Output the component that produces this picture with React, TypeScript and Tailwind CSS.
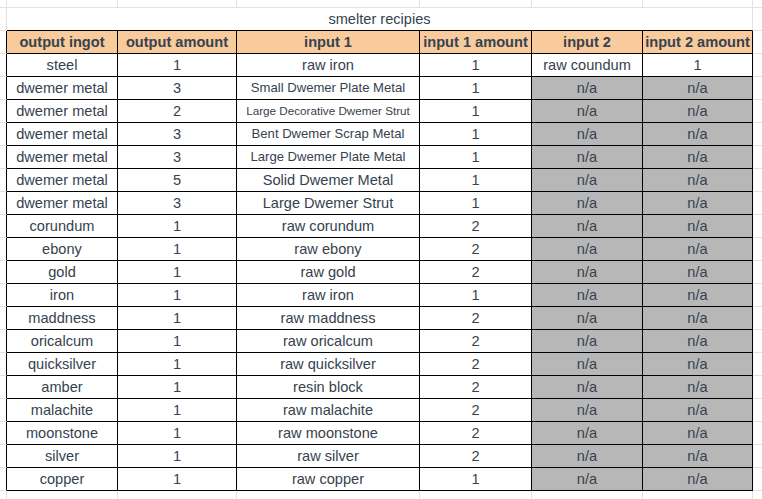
import React from 'react';

type Recipe = {
  ingot: string;
  amount: number;
  input1: string;
  input1Size?: string;
  input1Amount: number;
  input2?: string;
  input2Amount?: number;
};

const recipes: Recipe[] = [
  { ingot: 'steel', amount: 1, input1: 'raw iron', input1Amount: 1, input2: 'raw coundum', input2Amount: 1 },
  { ingot: 'dwemer metal', amount: 3, input1: 'Small Dwemer Plate Metal', input1Size: 'text-[13.1px]', input1Amount: 1 },
  { ingot: 'dwemer metal', amount: 2, input1: 'Large Decorative Dwemer Strut', input1Size: 'text-[11.7px]', input1Amount: 1 },
  { ingot: 'dwemer metal', amount: 3, input1: 'Bent Dwemer Scrap Metal', input1Size: 'text-[13.1px]', input1Amount: 1 },
  { ingot: 'dwemer metal', amount: 3, input1: 'Large Dwemer Plate Metal', input1Size: 'text-[13.1px]', input1Amount: 1 },
  { ingot: 'dwemer metal', amount: 5, input1: 'Solid Dwemer Metal', input1Amount: 1 },
  { ingot: 'dwemer metal', amount: 3, input1: 'Large Dwemer Strut', input1Amount: 1 },
  { ingot: 'corundum', amount: 1, input1: 'raw corundum', input1Amount: 2 },
  { ingot: 'ebony', amount: 1, input1: 'raw ebony', input1Amount: 2 },
  { ingot: 'gold', amount: 1, input1: 'raw gold', input1Amount: 2 },
  { ingot: 'iron', amount: 1, input1: 'raw iron', input1Amount: 1 },
  { ingot: 'maddness', amount: 1, input1: 'raw maddness', input1Amount: 2 },
  { ingot: 'oricalcum', amount: 1, input1: 'raw oricalcum', input1Amount: 2 },
  { ingot: 'quicksilver', amount: 1, input1: 'raw quicksilver', input1Amount: 2 },
  { ingot: 'amber', amount: 1, input1: 'resin block', input1Amount: 2 },
  { ingot: 'malachite', amount: 1, input1: 'raw malachite', input1Amount: 2 },
  { ingot: 'moonstone', amount: 1, input1: 'raw moonstone', input1Amount: 2 },
  { ingot: 'silver', amount: 1, input1: 'raw silver', input1Amount: 2 },
  { ingot: 'copper', amount: 1, input1: 'raw copper', input1Amount: 1 },
];

// column widths incl. the 1px right border
const cols = ['w-[7px]', 'w-[111px]', 'w-[119px]', 'w-[183px]', 'w-[112px]', 'w-[111px]', 'w-[110px]'];

const Cell = ({ w, className = '', children }: { w: string; className?: string; children?: React.ReactNode }) => (
  <div className={`${w} shrink-0 flex items-center justify-center whitespace-nowrap border-r border-b ${className}`}>
    {children}
  </div>
);

const headers = ['output ingot', 'output amount', 'input 1', 'input 1 amount', 'input 2', 'input 2 amount'];

const App: React.FC = () => {
  return (
    <div className="w-[762px] h-[499px] overflow-hidden bg-white text-[#36424e] font-['Liberation_Sans',Arial,sans-serif] text-[14.6px] leading-none">
      {/* top strip of empty sheet row */}
      <div className="flex h-[8px]">
        {cols.map((w, i) => (
          <div key={i} className={`${w} shrink-0 border-r border-b border-[#e2e2e2]`} />
        ))}
        <div className="flex-1 border-b border-[#e2e2e2]" />
      </div>

      {/* title */}
      <div className="flex h-[23px]">
        <Cell w="w-[7px]" className="border-[#e2e2e2]" />
        <Cell w="w-[746px]" className="border-r-[#e2e2e2] border-b-black">
          smelter recipies
        </Cell>
        <div className="flex-1 border-b border-[#e2e2e2]" />
      </div>

      {/* header */}
      <div className="flex h-[23px]">
        <Cell w="w-[7px]" className="border-r-black border-b-[#e2e2e2]" />
        {headers.map((h, i) => (
          <Cell key={h} w={cols[i + 1]} className="border-black bg-[#f9cb9c] font-bold">
            {h}
          </Cell>
        ))}
        <div className="flex-1 border-b border-[#e2e2e2]" />
      </div>

      {recipes.map((r, idx) => (
        <div key={idx} className="flex h-[23px]">
          <Cell w="w-[7px]" className="border-r-black border-b-[#e2e2e2]" />
          <Cell w={cols[1]} className="border-black">{r.ingot}</Cell>
          <Cell w={cols[2]} className="border-black">{r.amount}</Cell>
          <Cell w={cols[3]} className={`border-black ${r.input1Size ?? ''}`}>{r.input1}</Cell>
          <Cell w={cols[4]} className="border-black">{r.input1Amount}</Cell>
          {r.input2 ? (
            <>
              <Cell w={cols[5]} className="border-black">{r.input2}</Cell>
              <Cell w={cols[6]} className="border-black">{r.input2Amount}</Cell>
            </>
          ) : (
            <>
              <Cell w={cols[5]} className="border-black bg-[#b7b7b7]">n/a</Cell>
              <Cell w={cols[6]} className="border-black bg-[#b7b7b7]">n/a</Cell>
            </>
          )}
          <div className="flex-1 border-b border-[#e2e2e2]" />
        </div>
      ))}

      {/* empty sheet below */}
      <div className="flex h-[30px]">
        {cols.map((w, i) => (
          <div key={i} className={`${w} shrink-0 border-r border-b border-[#e2e2e2]`} />
        ))}
        <div className="flex-1 border-b border-[#e2e2e2]" />
      </div>
    </div>
  );
};

export default App;
